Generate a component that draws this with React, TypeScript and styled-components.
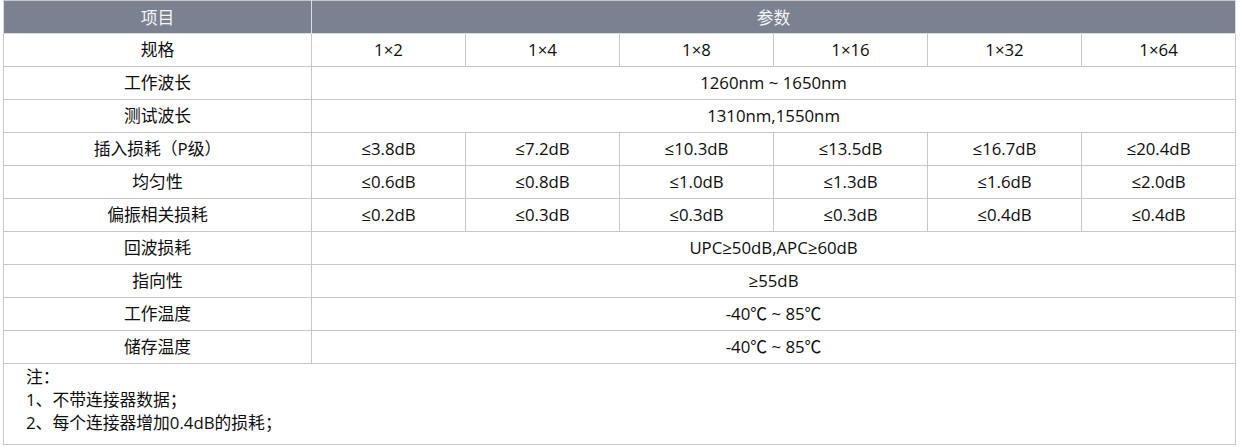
import React from "react";
import styled, { createGlobalStyle } from "styled-components";

const GlobalStyle = createGlobalStyle`
  html, body { margin: 0; padding: 0; background: #ffffff; }
  body { font-family: "Open Sans", "Noto Sans CJK SC", sans-serif; color: #0d0d0d; }
`;

const Page = styled.div`
  padding: 0 0 0 3px;
`;

const Table = styled.table`
  width: 1233px;
  border-collapse: collapse;
  table-layout: fixed;
  font-size: 16.8px;
  font-family: "Open Sans", "Noto Sans CJK SC", sans-serif;
  color: #0d0d0d;
`;

const Col = styled.col<{ $w: number }>`
  width: ${(p) => p.$w}px;
`;

const HeadCell = styled.th`
  height: 32px;
  padding: 0;
  background: #7b8191;
  color: #f4f5f7;
  font-weight: 400;
  text-align: center;
  border: 1px solid #dcdde1;
  border-top-color: #c8c8c8;
`;

const Cell = styled.td`
  height: 32px;
  padding: 0;
  text-align: center;
  vertical-align: middle;
  border: 1px solid #c6c6c6;
  white-space: nowrap;
  line-height: 20px;
`;

const NoteCell = styled.td`
  padding: 1px 0 10px 22px;
  border: 1px solid #c6c6c6;
  text-align: left;
  line-height: 23px;
`;

const NoteLine = styled.div`
  white-space: nowrap;
`;

type Row = { label: string; values: string[] };

const rows: Row[] = [
  { label: "规格", values: ["1×2", "1×4", "1×8", "1×16", "1×32", "1×64"] },
  { label: "工作波长", values: ["1260nm ~ 1650nm"] },
  { label: "测试波长", values: ["1310nm,1550nm"] },
  { label: "插入损耗（P级）", values: ["≤3.8dB", "≤7.2dB", "≤10.3dB", "≤13.5dB", "≤16.7dB", "≤20.4dB"] },
  { label: "均匀性", values: ["≤0.6dB", "≤0.8dB", "≤1.0dB", "≤1.3dB", "≤1.6dB", "≤2.0dB"] },
  { label: "偏振相关损耗", values: ["≤0.2dB", "≤0.3dB", "≤0.3dB", "≤0.3dB", "≤0.4dB", "≤0.4dB"] },
  { label: "回波损耗", values: ["UPC≥50dB,APC≥60dB"] },
  { label: "指向性", values: ["≥55dB"] },
  { label: "工作温度", values: ["-40℃ ~ 85℃"] },
  { label: "储存温度", values: ["-40℃ ~ 85℃"] },
];

const colWidths = [308, 154, 154, 154, 154, 154, 154];

const notes = ["注：", "1、不带连接器数据；", "2、每个连接器增加0.4dB的损耗；"];

export default function App() {
  return (
    <Page>
      <GlobalStyle />
      <Table>
        <colgroup>
          {colWidths.map((w, i) => (
            <Col key={i} $w={w} />
          ))}
        </colgroup>
        <thead>
          <tr>
            <HeadCell>项目</HeadCell>
            <HeadCell colSpan={6}>参数</HeadCell>
          </tr>
        </thead>
        <tbody>
          {rows.map((r) => (
            <tr key={r.label}>
              <Cell>{r.label}</Cell>
              {r.values.length === 1 ? (
                <Cell colSpan={6}>{r.values[0]}</Cell>
              ) : (
                r.values.map((v, i) => <Cell key={i}>{v}</Cell>)
              )}
            </tr>
          ))}
          <tr>
            <NoteCell colSpan={7}>
              {notes.map((n) => (
                <NoteLine key={n}>{n}</NoteLine>
              ))}
            </NoteCell>
          </tr>
        </tbody>
      </Table>
    </Page>
  );
}
